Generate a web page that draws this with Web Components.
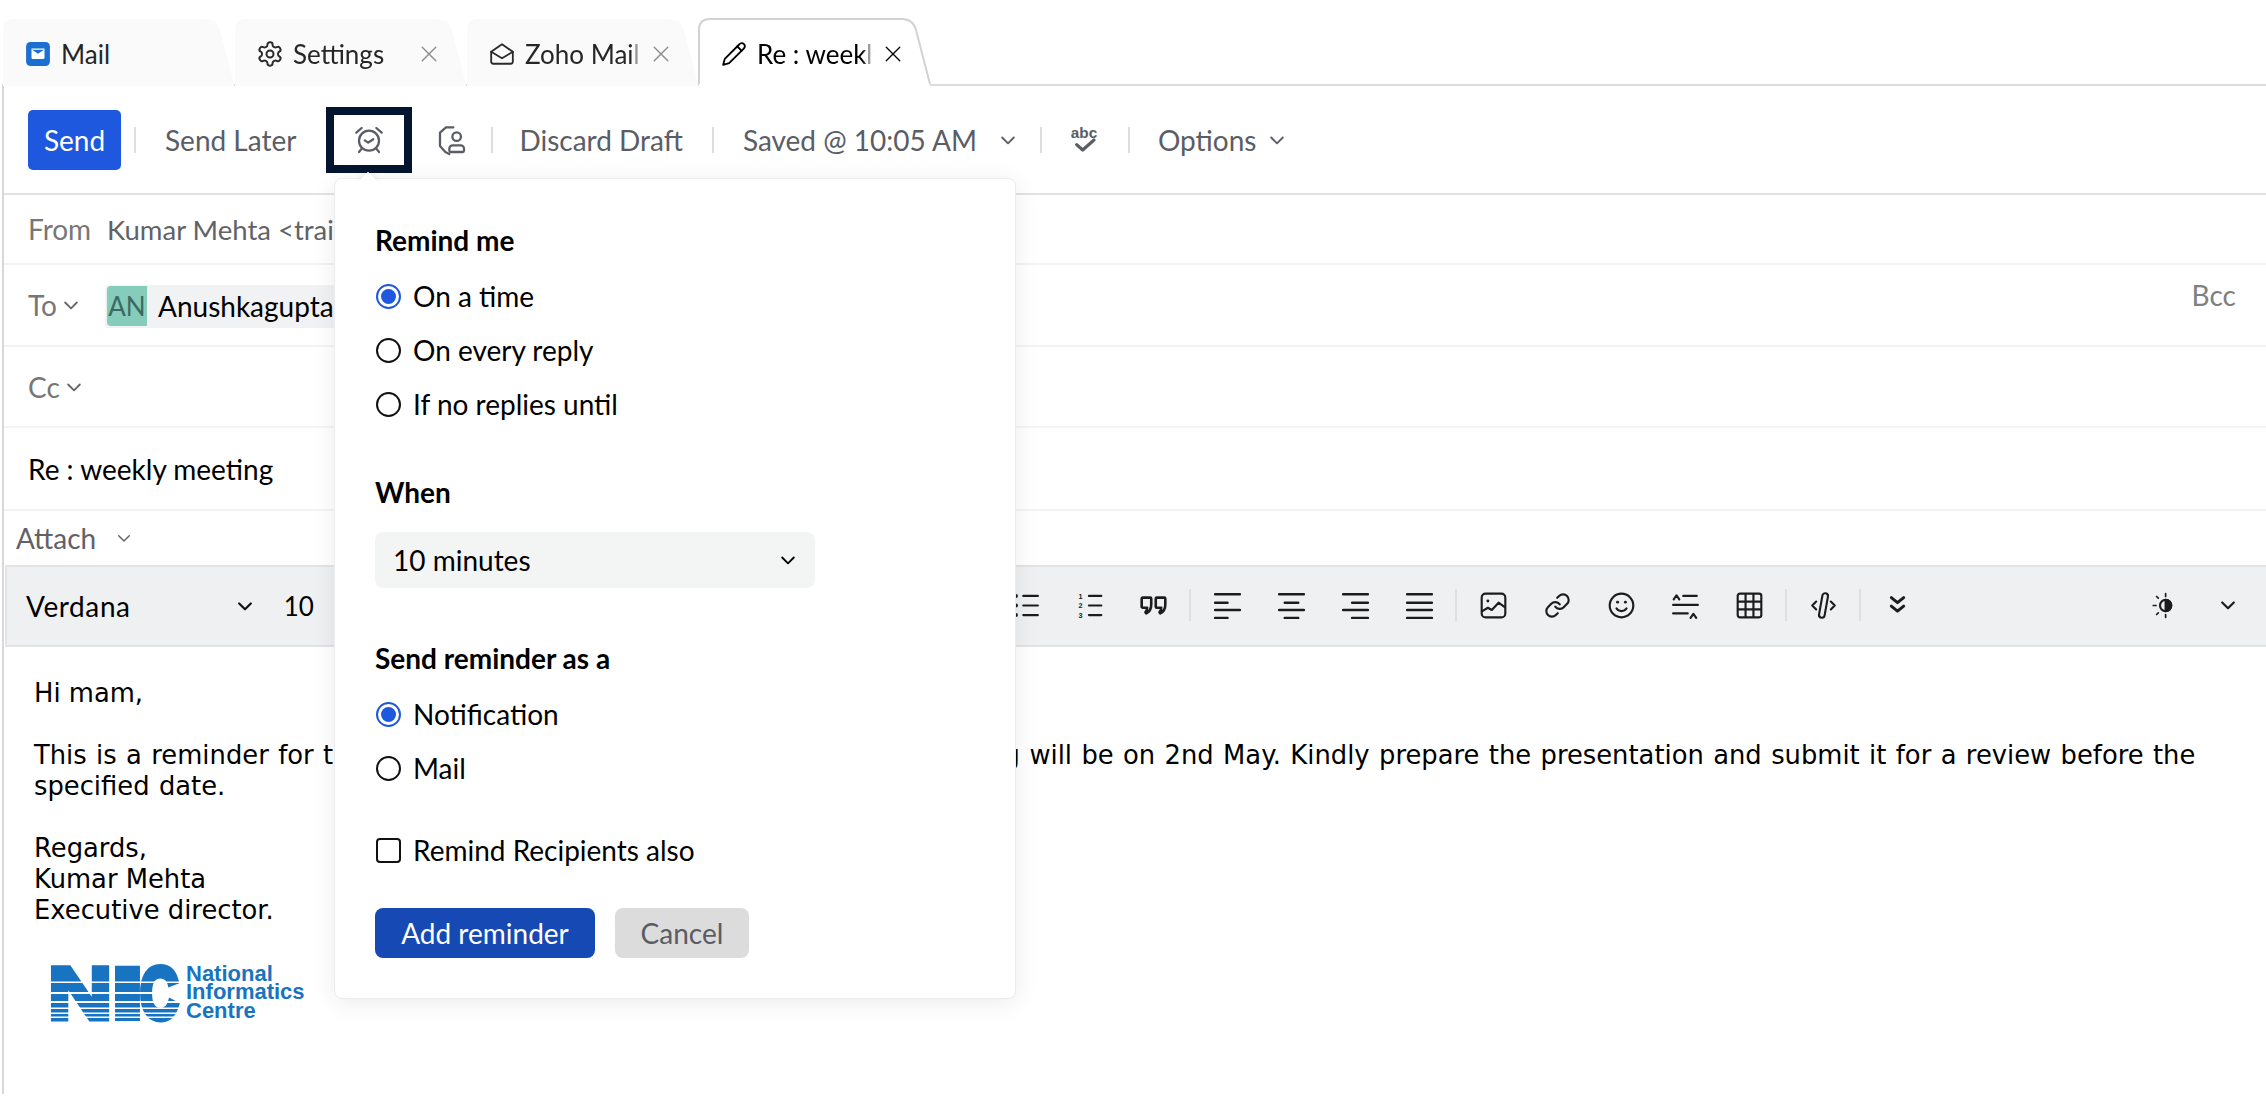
<!DOCTYPE html>
<html lang="en"><head><meta charset="utf-8"><title>Reminder</title>
<style>html,body{margin:0;padding:0;background:#fff;overflow:hidden}body{width:2266px;height:1096px;font-family:Lato,"Liberation Sans",sans-serif;font-size:28px;color:#000}</style>
</head><body>
<compose-app></compose-app>
<script>
const ICONS={
 mail:'<g stroke="none"><rect x="1" y="1" width="22" height="22" rx="4" fill="#1b6fd0"/><path d="M6 7h12v8.500a1 1 0 0 1-1 1H7a1 1 0 0 1-1-1z" fill="#fff"/><path d="M6.500 8l5.500 3.800L17.500 8z" fill="#1b6fd0"/></g>',
 gear:'<path d="M12.220 2h-.44a2 2 0 0 0-2 2v.18a2 2 0 0 1-1 1.730l-.43.25a2 2 0 0 1-2 0l-.15-.08a2 2 0 0 0-2.730.73l-.22.38a2 2 0 0 0 .73 2.730l.15.1a2 2 0 0 1 1 1.720v.51a2 2 0 0 1-1 1.740l-.15.09a2 2 0 0 0-.73 2.730l.22.38a2 2 0 0 0 2.730.73l.15-.08a2 2 0 0 1 2 0l.43.25a2 2 0 0 1 1 1.730V20a2 2 0 0 0 2 2h.44a2 2 0 0 0 2-2v-.18a2 2 0 0 1 1-1.730l.43-.25a2 2 0 0 1 2 0l.15.08a2 2 0 0 0 2.730-.73l.22-.39a2 2 0 0 0-.73-2.730l-.15-.08a2 2 0 0 1-1-1.740v-.5a2 2 0 0 1 1-1.740l.15-.09a2 2 0 0 0 .73-2.730l-.22-.38a2 2 0 0 0-2.730-.73l-.15.08a2 2 0 0 1-2 0l-.43-.25a2 2 0 0 1-1-1.730V4a2 2 0 0 0-2-2z"/><circle cx="12" cy="12" r="3"/>',
 open:'<path d="M2 10 12 3l10 7v9a2 2 0 0 1-2 2H4a2 2 0 0 1-2-2z"/><path d="M2 10l10 6 10-6"/>',
 pencil:'<path d="M17 3a2.850 2.830 0 1 1 4 4L7.500 20.500 2 22l1.500-5.500Z"/><path d="m15 5 4 4"/>',
 alarm:'<circle cx="12" cy="12.500" r="7.500"/><path d="M8.800 12.300l2.600 1.700 3.800-2.600"/><path d="M2.500 6.500 6.500 3M21.500 6.500 17.500 3M6.500 18.500 4.500 21M17.500 18.500 19.500 21"/>',
 contact:'<path d="M13 2.500H7.500L3 6.500v10l4 4.500 3 1.500"/><circle cx="15.500" cy="9.500" r="3.200"/><path d="M10 20v-1.500a2.500 2.500 0 0 1 2.500-2.500h6a2.500 2.500 0 0 1 2.500 2.500V20a1 1 0 0 1-1 1h-9a1 1 0 0 1-1-1z"/>',
 abc:'<text x="12" y="10.500" text-anchor="middle" font-family="Liberation Sans" font-weight="700" font-size="11.500" fill="currentColor" stroke="none">abc</text><path d="M6.500 15.500l4.500 4 8.500-7.500" stroke-width="2.400"/>',
 bullets:'<circle cx="3.500" cy="3.500" r="1.800" fill="currentColor" stroke="none"/><circle cx="3.500" cy="12" r="1.800" fill="currentColor" stroke="none"/><circle cx="3.500" cy="20.500" r="1.800" fill="currentColor" stroke="none"/><path d="M10 3.500h13M10 12h13M10 20.500h13"/>',
 numbers:'<g font-family="Liberation Sans" font-weight="700" font-size="6.500" fill="currentColor" stroke="none" text-anchor="middle"><text x="4" y="6">1</text><text x="4" y="14.500">2</text><text x="4" y="23">3</text></g><path d="M11.500 3.500h11M11.500 12h11M11.500 20.500h11"/>',
 quote:'<path d="M1.500 6a1 1 0 0 1 1-1h6.500a1 1 0 0 1 1 1v5c0 3.500-1.500 6.500-4.500 8l-.7-1c1-1 1.600-2.500 1.600-4H2.500a1 1 0 0 1-1-1z M14 6a1 1 0 0 1 1-1h6.500a1 1 0 0 1 1 1v5c0 3.500-1.500 6.500-4.500 8l-.7-1c1-1 1.600-2.500 1.600-4H15a1 1 0 0 1-1-1z" stroke-width="2.300"/>',
 aleft:'<path d="M1 2h22M1 9.500h11M1 16h22M1 23h11" stroke-width="2.200"/>',
 acenter:'<path d="M1 2h22M6 9.500h12M1 16h22M6 23h12" stroke-width="2.200"/>',
 aright:'<path d="M1 2h22M9 9.500h14M1 16h22M9 23h14" stroke-width="2.200"/>',
 ajust:'<path d="M1 2h22M1 9.500h22M1 16h22M1 23h22" stroke-width="2.200"/>',
 image:'<rect x="1.500" y="1.500" width="21" height="21" rx="3.500"/><circle cx="7" cy="8" r="1.300" fill="currentColor" stroke="none"/><path d="M2 17l5-3 3.500 2 6-6.500L22 13.500"/>',
 link:'<path d="M10 13a5 5 0 0 0 7.540.54l3-3a5 5 0 0 0-7.070-7.070l-1.720 1.710"/><path d="M14 11a5 5 0 0 0-7.540-.54l-3 3a5 5 0 0 0 7.070 7.070l1.710-1.710"/>',
 smile:'<circle cx="12" cy="12" r="10.500"/><path d="M7.500 14.500s1.500 2.500 4.500 2.500 4.500-2.500 4.500-2.500"/><circle cx="8.500" cy="9" r="1.300" fill="currentColor" stroke="none"/><circle cx="15.500" cy="9" r="1.300" fill="currentColor" stroke="none"/>',
 spacing:'<path d="M1.500 6.500 4 3l2.500 3.500M10 3.500h12M1 11.500h22M1 19h13M16.500 23l2.500-3.500 2.500 3.500"/>',
 table:'<rect x="1.500" y="1.500" width="21" height="21" rx="2"/><path d="M8.500 2v20M15.500 2v20M2 8.500h20M2 15.500h20"/>',
 source:'<path d="M5.500 8.500 2 12l3.500 3.500M18.500 8.500 22 12l-3.500 3.500"/><rect x="9.500" y="1" width="5" height="22" rx="2.500" transform="rotate(10 12 12)"/>',
 dbl:'<path d="M6.500 5l5.500 4.500L17.500 5M6.500 12.500l5.500 4.500 5.500-4.500" stroke-width="2.600"/>',
 theme:'<circle cx="13" cy="12" r="5"/><path d="M13 7a5 5 0 0 1 0 10z" fill="currentColor"/><path d="M13 1.500v2.500M13 20v2.500M4.500 12H2M6.500 5.500 5 4M6.500 18.500 5 20" stroke-width="1.500"/>',
 chev:'<path d="M5 9l7 7 7-7"/>',
 x:'<path d="M3 3l18 18M21 3 3 21" stroke-width="1.800"/>'
};
function el(name,css,html){
 customElements.define(name,class extends HTMLElement{constructor(){super();const r=this.attachShadow({mode:'open'});r.innerHTML='<style>'+css+'</style>'+(typeof html==='function'?html():html)}});
}
class ZIcon extends HTMLElement{
 connectedCallback(){if(this.shadowRoot)return;const r=this.attachShadow({mode:'open'});const s=this.getAttribute('size')||26,w=this.getAttribute('stroke')||2;
  r.innerHTML='<style>:host{display:inline-flex;flex:none;width:'+s+'px;height:'+s+'px}svg{display:block;overflow:visible}</style><svg width="'+s+'" height="'+s+'" viewBox="0 0 24 24" fill="none" stroke="currentColor" stroke-width="'+w+'" stroke-linecap="round" stroke-linejoin="round">'+ICONS[this.getAttribute('name')]+'</svg>'}
}
customElements.define('z-icon',ZIcon);

class MailTab extends HTMLElement{
 connectedCallback(){if(this.shadowRoot)return;const a=this.hasAttribute('active'),ic=this.getAttribute('icon'),cl=this.hasAttribute('close');
  const d='M1 66V12Q1 1 12 1H204Q215 1 218 12L232 66';
  const big=ic==='gear';
  const r=this.attachShadow({mode:'open'});
  r.innerHTML=`<style>:host{display:flex;position:relative;align-items:center;width:232px;height:68px;margin-bottom:-2px;box-sizing:border-box;padding:3px 0 0 ${big?22:23}px;color:#222;font-size:26px;z-index:${a?2:0}}
  svg.bg{position:absolute;left:0;top:0;z-index:-1}
  z-icon.i{margin-right:${big?9:10}px;color:${a?'#000':'#2b2b2b'}}
  .l{width:117px;white-space:nowrap;overflow:hidden;${cl?'-webkit-mask-image:linear-gradient(90deg,#000 90%,transparent);mask-image:linear-gradient(90deg,#000 90%,transparent);':''}color:${a?'#000':'#262626'}}
  z-icon.x{margin-left:10px;color:${a?'#000':'#888'}}</style>
  <svg class="bg" width="236" height="68"><path d="${d}V68H1Z" fill="${a?'#fff':'#fafafa'}" stroke="none"/>${a?`<path d="${d}" fill="none" stroke="#d2d2d2" stroke-width="2"/>`:''}</svg>
  <z-icon class="i" name="${ic}" size="${big?28:26}" stroke="1.700"></z-icon><span class="l"><slot></slot></span>${cl?'<z-icon class="x" name="x" size="18"></z-icon>':''}`;}
}
customElements.define('mail-tab',MailTab);

el('tool-sep',':host{display:block;flex:none;width:2px;height:26px;background:#dedede}','');
el('compose-toolbar',`:host{display:flex;align-items:center;height:109px;padding-left:24px;box-sizing:border-box;border-bottom:2px solid #e2e2e2;color:#5a5d66;white-space:nowrap}
 .send{width:93px;height:60px;background:#1d58de;border-radius:5px;color:#fff;display:flex;align-items:center;justify-content:center;flex:none}
 .focus{width:86px;height:66px;box-sizing:border-box;border:8px solid #04152f;display:flex;align-items:center;justify-content:center;margin-left:30px;color:#5a5d66;flex:none}
 tool-sep.a{margin-left:13px}.sl{margin-left:29px}.m21{margin-left:21px}.m22{margin-left:22px}.m23{margin-left:23px}.m24{margin-left:24px}.m29{margin-left:29px}.m26{margin-left:26px}.m28{margin-left:28px}.m11{margin-left:11px}`,
 `<div class="send">Send</div><tool-sep class="a"></tool-sep><span class="sl">Send Later</span>
 <div class="focus"><z-icon name="alarm" size="32" stroke="1.700"></z-icon></div>
 <z-icon class="m24" name="contact" size="32" stroke="1.700"></z-icon><tool-sep class="m23"></tool-sep>
 <span class="m26">Discard Draft</span><tool-sep class="m29"></tool-sep><span class="m29">Saved @ 10:05 AM</span>
 <z-icon class="m21" name="chev" size="20" stroke="2.200"></z-icon><tool-sep class="m22"></tool-sep>
 <z-icon class="m26" name="abc" size="32" stroke="2.200"></z-icon><tool-sep class="m28"></tool-sep>
 <span class="m28">Options</span><z-icon class="m11" name="chev" size="20" stroke="2.200"></z-icon>`);
el('head-row',`:host{display:flex;align-items:center;box-sizing:border-box;border-bottom:2px solid #f3f3f3;padding-left:24px;color:#777;position:relative;white-space:nowrap}`,'<slot></slot>');
el('recipient-chip',`:host{display:flex;align-items:center;height:43px;margin-top:2px;background:#f1f2f4;border-radius:4px;padding:0 40px 0 2px;color:#000;box-sizing:border-box}
 .a{width:40px;height:40px;background:#86ccbb;color:#3c6a62;border-radius:4px 0 0 4px;display:flex;align-items:center;justify-content:center;margin-right:11px;font-size:26px}`,'<span class="a">AN</span><slot></slot>');
el('fmt-cell',':host{display:flex;flex:none;width:64px;justify-content:center;align-items:center;color:#1c1c1c;margin-top:-2px}',"<slot></slot>");
el('fmt-sep',':host{display:flex;flex:none;width:10px;justify-content:center;margin-top:-2px}i{display:block;width:2px;height:32px;background:#dfdfe2}','<i></i>');
el('format-bar',`:host{display:flex;align-items:center;height:82px;margin-left:1px;box-sizing:border-box;background:#eff0f2;border:2px solid #e3e3e5;border-right:0;padding-right:6px;color:#000;justify-content:space-between}
 .left{width:986px;flex:none;display:flex;align-items:center;padding-left:19px;box-sizing:border-box}
 .group{display:flex;align-items:center}.vd{letter-spacing:.6px}.c{margin-left:104px;color:#111}.s{margin-left:29px;font-size:26px}.grow{flex:1}`,
 ()=>{const c=n=>`<fmt-cell><z-icon name="${n}" size="27" stroke="1.900"></z-icon></fmt-cell>`,s='<fmt-sep></fmt-sep>';
 return `<div class="left"><span class="vd">Verdana</span><z-icon class="c" name="chev" size="20" stroke="2.600"></z-icon><span class="s">10</span></div>
 <div class="group">${c('bullets')}${c('numbers')}${c('quote')}${s}${c('aleft')}${c('acenter')}${c('aright')}${c('ajust')}${s}${c('image')}${c('link')}${c('smile')}${c('spacing')}${c('table')}${s}${c('source')}${s}${c('dbl')}</div>
 <div class="grow"></div>
 <div class="group">${c('theme')}<fmt-cell><z-icon name="chev" size="20" stroke="2.600"></z-icon></fmt-cell></div>`});
el('mail-body',`:host{display:block;padding:31px 40px 0 30px;font-family:"DejaVu Sans",Verdana,sans-serif;font-size:25.800px;line-height:31px;color:#000}
 p{margin:0 0 31px}
 .ws{word-spacing:1.200px}.under{word-spacing:-2.100px}
 .logo{display:block;margin:37px 0 0 16px;overflow:visible}`,
 `<p>Hi mam,</p><p class="ws">This is a reminder for <span class="under">the upcoming weekly team meeting. The next </span>meeting will be on 2nd May. Kindly prepare the presentation and submit it for a review before the specified date.</p><p style="margin:0">Regards,<br>Kumar Mehta<br>Executive director.</p>
 <svg class="logo" width="262" height="60" viewBox="0 0 262 60">
 <g fill="#1874c1" stroke="#1874c1" font-family="Liberation Sans" font-weight="700" font-size="74">
 <text transform="translate(-2 56) scale(1.200 1)" stroke-width="5">N</text>
 <text transform="translate(60 56) scale(1.700 1)" stroke-width="4">I</text>
 <text transform="translate(90 56) scale(.720 1)" stroke-width="6">C</text></g>
 <g fill="#fff"><rect x="0" y="18.500" width="130" height="1.500"/><rect x="0" y="29" width="130" height="2"/><rect x="0" y="38" width="130" height="2"/><rect x="0" y="44.500" width="130" height="1.500"/><rect x="0" y="49.500" width="130" height="1.500"/><rect x="0" y="53.500" width="130" height="1.500"/></g>
 <g fill="#1874c1" font-family="Liberation Sans" font-weight="700" font-size="22"><text x="136" y="18">National</text><text x="136" y="36">Informatics</text><text x="136" y="55">Centre</text></g></svg>`);
el('pop-radio',`:host{display:flex;align-items:center;height:54px;color:#000}
 .b{width:25px;height:25px;box-sizing:border-box;border:2px solid #111;border-radius:50%;margin:0 12px 0 1px;flex:none;display:flex;align-items:center;justify-content:center}
 :host([on]) .b{border-color:#1d58de}:host([on]) .b::after{content:"";width:15px;height:15px;border-radius:50%;background:#1d58de}
 :host([square]) .b{border-radius:4px}`,'<span class="b"></span><slot></slot>');
el('reminder-popup',`:host{position:absolute;left:334px;top:178px;width:682px;height:821px;box-sizing:border-box;background:#fff;border:1px solid #ececec;border-radius:8px;box-shadow:0 4px 24px rgba(0,0,0,.08);padding:43px 0 0 40px;z-index:5;color:#000}
 .caret{position:absolute;left:25px;top:-4px;width:16px;height:16px;background:#fff;transform:rotate(45deg);box-shadow:-2px -2px 5px rgba(0,0,0,.05)}
 h4{margin:0;font-size:28px;font-weight:700;line-height:36px}
 .sel{width:440px;height:56px;background:#f3f5f5;border-radius:8px;margin-top:22px;display:flex;align-items:center;justify-content:space-between;padding:0 17px 0 18px;box-sizing:border-box}
 .btns{display:flex;gap:20px;margin-top:31px}.b{height:50px;border-radius:8px;display:flex;align-items:center;justify-content:center}
 .add{width:220px;background:#1749b5;color:#fff}.can{width:134px;background:#dcdcdc;color:#5a5d66}
 .r1{margin-top:11px}.h2{margin-top:43px}.h3{margin-top:52px}.chk{margin-top:28px}`,
 `<div class="caret"></div><h4>Remind me</h4><div class="r1"><pop-radio on>On a time</pop-radio><pop-radio>On every reply</pop-radio><pop-radio>If no replies until</pop-radio></div>
 <h4 class="h2">When</h4><div class="sel"><span>10 minutes</span><z-icon name="chev" size="20" stroke="2.200"></z-icon></div>
 <h4 class="h3">Send reminder as a</h4><div class="r1"><pop-radio on>Notification</pop-radio><pop-radio>Mail</pop-radio></div>
 <pop-radio class="chk" square>Remind Recipients also</pop-radio>
 <div class="btns"><div class="b add">Add reminder</div><div class="b can">Cancel</div></div>`);
el('compose-app',`:host{display:block;position:relative;width:2266px;height:1096px;overflow:hidden}
 .tabs{display:flex;height:66px;margin:18px 0 0 2px;align-items:flex-end}
 .frame{margin-left:2px;border-left:2px solid #d8d8dc;border-top:2px solid #dcdcdc;height:1010px;box-sizing:border-box}
 .from{height:70px}.to{height:82px}.cc{height:81px}.subj{height:83px;color:#000}.att{height:54px;border:0;padding-left:12px;color:#5f6268}
 .lab{display:inline-flex;align-items:center;flex:none}
 .v{color:#5f6368;font-size:27.500px}
 .chev1{margin-left:4px;color:#666}.bcc{margin-left:auto;margin-right:30px;margin-top:-20px;color:#808080}`,
 `<div class="tabs"><mail-tab icon="mail">Mail</mail-tab><mail-tab icon="gear" close>Settings</mail-tab><mail-tab icon="open" close>Zoho Mail</mail-tab><mail-tab icon="pencil" active close>Re : weekly</mail-tab></div>
 <div class="frame"><compose-toolbar></compose-toolbar>
 <head-row class="from"><span class="lab" style="width:79px">From</span><span class="v">Kumar Mehta &lt;training@zylker.com&gt;</span></head-row>
 <head-row class="to"><span class="lab" style="width:77px">To<z-icon class="chev1" name="chev" size="20" stroke="2.200"></z-icon></span><recipient-chip>Anushkagupta</recipient-chip><span class="bcc">Bcc</span></head-row>
 <head-row class="cc"><span class="lab">Cc<z-icon class="chev1" name="chev" size="20" stroke="2.200"></z-icon></span></head-row>
 <head-row class="subj">Re : weekly meeting</head-row>
 <head-row class="att"><span class="lab">Attach<z-icon class="chev1" style="margin-left:19px" name="chev" size="18" stroke="2"></z-icon></span></head-row>
 <format-bar></format-bar><mail-body></mail-body></div>
 <reminder-popup></reminder-popup>`);
</script>
</body></html>
